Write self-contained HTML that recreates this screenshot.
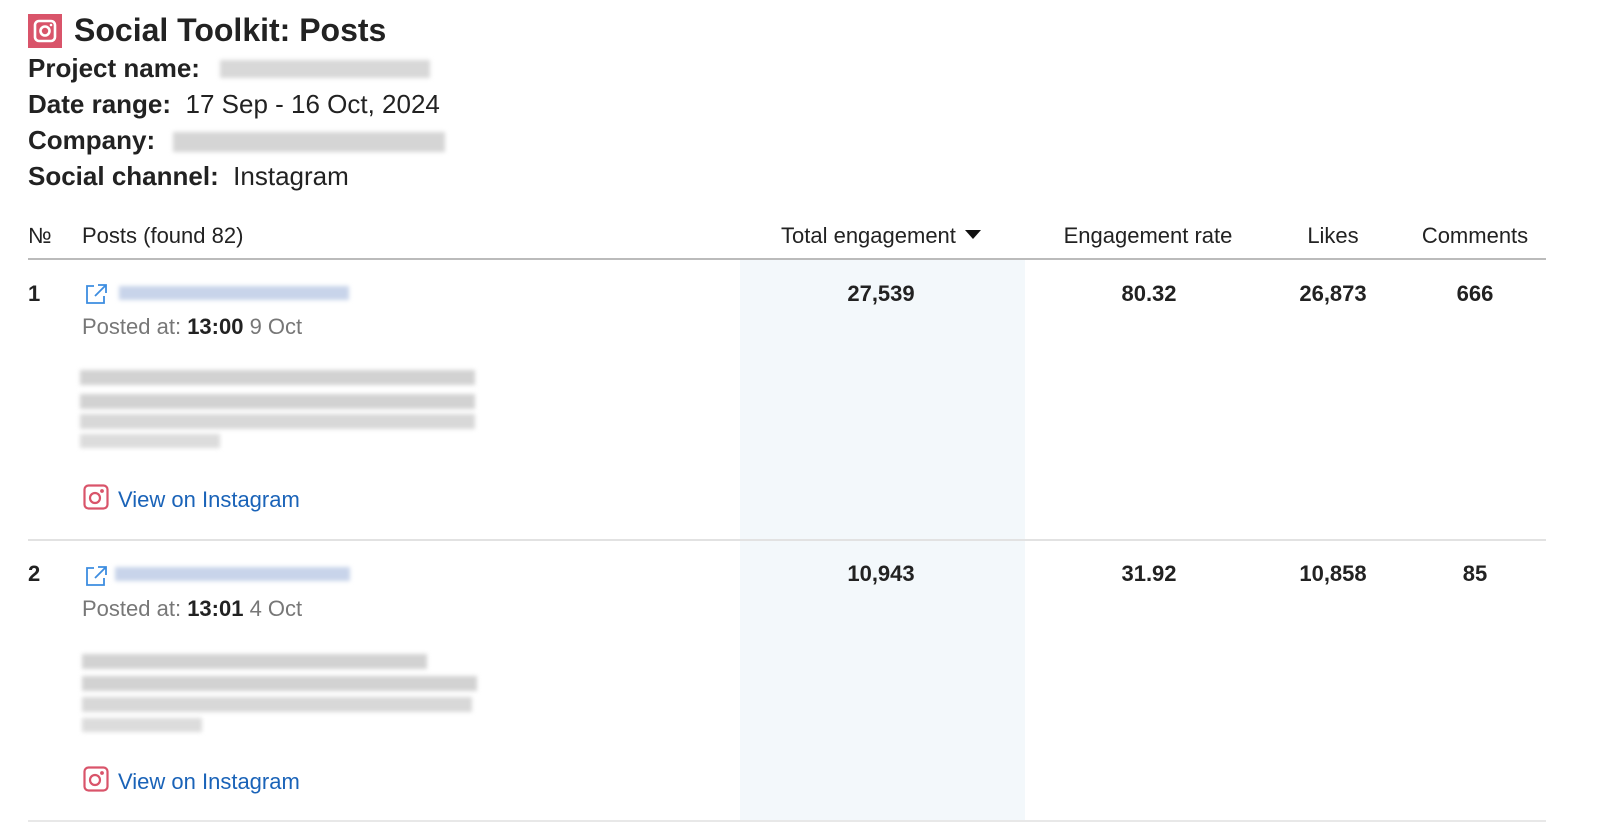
<!DOCTYPE html>
<html><head><meta charset="utf-8"><style>
body{margin:0;width:1600px;height:839px;background:#fff;font-family:"Liberation Sans",Arial,sans-serif;color:#222;position:relative;overflow:hidden}
.a{position:absolute;white-space:nowrap}
.c{position:absolute;white-space:nowrap;width:200px;text-align:center}
.b{font-weight:bold}
.blur{position:absolute;filter:blur(2px);}
.g{color:#777}
.lnk{color:#1a63b8}
</style></head><body>
<div class="a" style="left:740px;top:260px;width:285px;height:562px;background:#f3f8fb"></div>
<svg class="a" style="left:28px;top:14px" width="34" height="34" viewBox="0 0 34 34"><rect width="34" height="34" fill="#d9546a"/><rect x="7" y="7" width="20" height="20" rx="4" fill="none" stroke="#fff" stroke-width="2.6"/><circle cx="17" cy="17" r="4.5" fill="none" stroke="#fff" stroke-width="2.6"/><circle cx="23" cy="11" r="1.3" fill="#fff"/></svg>
<div class="a b" style="left:74px;top:12px;font-size:32px">Social Toolkit: Posts</div>
<div class="a" style="left:28px;top:52px;font-size:26px;line-height:32px"><b>Project name:</b></div>
<div class="blur" style="left:220px;top:60px;width:210px;height:18px;background:#d8d8d8"></div>
<div class="a" style="left:28px;top:88px;font-size:26px;line-height:32px"><b>Date range:</b>&nbsp; 17 Sep - 16 Oct, 2024</div>
<div class="a" style="left:28px;top:124px;font-size:26px;line-height:32px"><b>Company:</b></div>
<div class="blur" style="left:173px;top:132px;width:272px;height:20px;background:#d5d5d5"></div>
<div class="a" style="left:28px;top:160px;font-size:26px;line-height:32px"><b>Social channel:</b>&nbsp; Instagram</div>

<div class="a" style="left:28px;top:223px;font-size:22px">№</div>
<div class="a" style="left:82px;top:223px;font-size:22px">Posts (found 82)</div>
<div class="a" style="left:781px;top:223px;font-size:22px">Total engagement</div>
<svg class="a" style="left:965px;top:230px" width="16" height="10"><path d="M0 0H16L8 9Z" fill="#111"/></svg>
<div class="c" style="left:1048px;top:223px;font-size:22px">Engagement rate</div>
<div class="c" style="left:1233px;top:223px;font-size:22px">Likes</div>
<div class="c" style="left:1375px;top:223px;font-size:22px">Comments</div>
<div class="a" style="left:28px;top:258px;width:1518px;height:2px;background:#bbb"></div>

<!-- row 1 -->
<div class="a b" style="left:28px;top:281px;font-size:22px">1</div>
<svg class="a" style="left:85px;top:284px" width="22" height="20" viewBox="0 0 22 20" fill="none" stroke="#3d8de0" stroke-width="1.8"><path d="M9 2H2V19H19V12M13 1H21V9M21 1L10 12"/></svg>
<div class="blur" style="left:119px;top:286px;width:230px;height:14px;background:#c8d4ea"></div>
<div class="a g" style="left:82px;top:314px;font-size:22px">Posted at: <b style="color:#222">13:00</b> 9 Oct</div>
<div class="blur" style="left:80px;top:370px;width:395px;height:15px;background:#d2d2d2"></div>
<div class="blur" style="left:80px;top:394px;width:395px;height:15px;background:#d2d2d2"></div>
<div class="blur" style="left:80px;top:414px;width:395px;height:15px;background:#d8d8d8"></div>
<div class="blur" style="left:80px;top:434px;width:140px;height:14px;background:#dcdcdc"></div>
<svg class="a" style="left:83px;top:484px" width="26" height="26" viewBox="0 0 26 26" fill="none" stroke="#d9546a" stroke-width="2.2"><rect x="1.5" y="1.5" width="23" height="23" rx="4"/><circle cx="12" cy="14" r="5"/><circle cx="19" cy="7" r="0.8" fill="#d9546a"/></svg>
<div class="a lnk" style="left:118px;top:487px;font-size:22px">View on Instagram</div>
<div class="c b" style="left:781px;top:281px;font-size:22px">27,539</div>
<div class="c b" style="left:1049px;top:281px;font-size:22px">80.32</div>
<div class="c b" style="left:1233px;top:281px;font-size:22px">26,873</div>
<div class="c b" style="left:1375px;top:281px;font-size:22px">666</div>
<div class="a" style="left:28px;top:539px;width:1518px;height:2px;background:#e2e2e2"></div>

<!-- row 2 -->
<div class="a b" style="left:28px;top:561px;font-size:22px">2</div>
<svg class="a" style="left:85px;top:566px" width="22" height="20" viewBox="0 0 22 20" fill="none" stroke="#3d8de0" stroke-width="1.8"><path d="M9 2H2V19H19V12M13 1H21V9M21 1L10 12"/></svg>
<div class="blur" style="left:115px;top:567px;width:235px;height:14px;background:#c8d4ea"></div>
<div class="a g" style="left:82px;top:596px;font-size:22px">Posted at: <b style="color:#222">13:01</b> 4 Oct</div>
<div class="blur" style="left:82px;top:654px;width:345px;height:15px;background:#d2d2d2"></div>
<div class="blur" style="left:82px;top:676px;width:395px;height:15px;background:#d2d2d2"></div>
<div class="blur" style="left:82px;top:697px;width:390px;height:15px;background:#d8d8d8"></div>
<div class="blur" style="left:82px;top:718px;width:120px;height:14px;background:#dcdcdc"></div>
<svg class="a" style="left:83px;top:766px" width="26" height="26" viewBox="0 0 26 26" fill="none" stroke="#d9546a" stroke-width="2.2"><rect x="1.5" y="1.5" width="23" height="23" rx="4"/><circle cx="12" cy="14" r="5"/><circle cx="19" cy="7" r="0.8" fill="#d9546a"/></svg>
<div class="a lnk" style="left:118px;top:769px;font-size:22px">View on Instagram</div>
<div class="c b" style="left:781px;top:561px;font-size:22px">10,943</div>
<div class="c b" style="left:1049px;top:561px;font-size:22px">31.92</div>
<div class="c b" style="left:1233px;top:561px;font-size:22px">10,858</div>
<div class="c b" style="left:1375px;top:561px;font-size:22px">85</div>
<div class="a" style="left:28px;top:820px;width:1518px;height:2px;background:#e8e8e8"></div>
</body></html>
